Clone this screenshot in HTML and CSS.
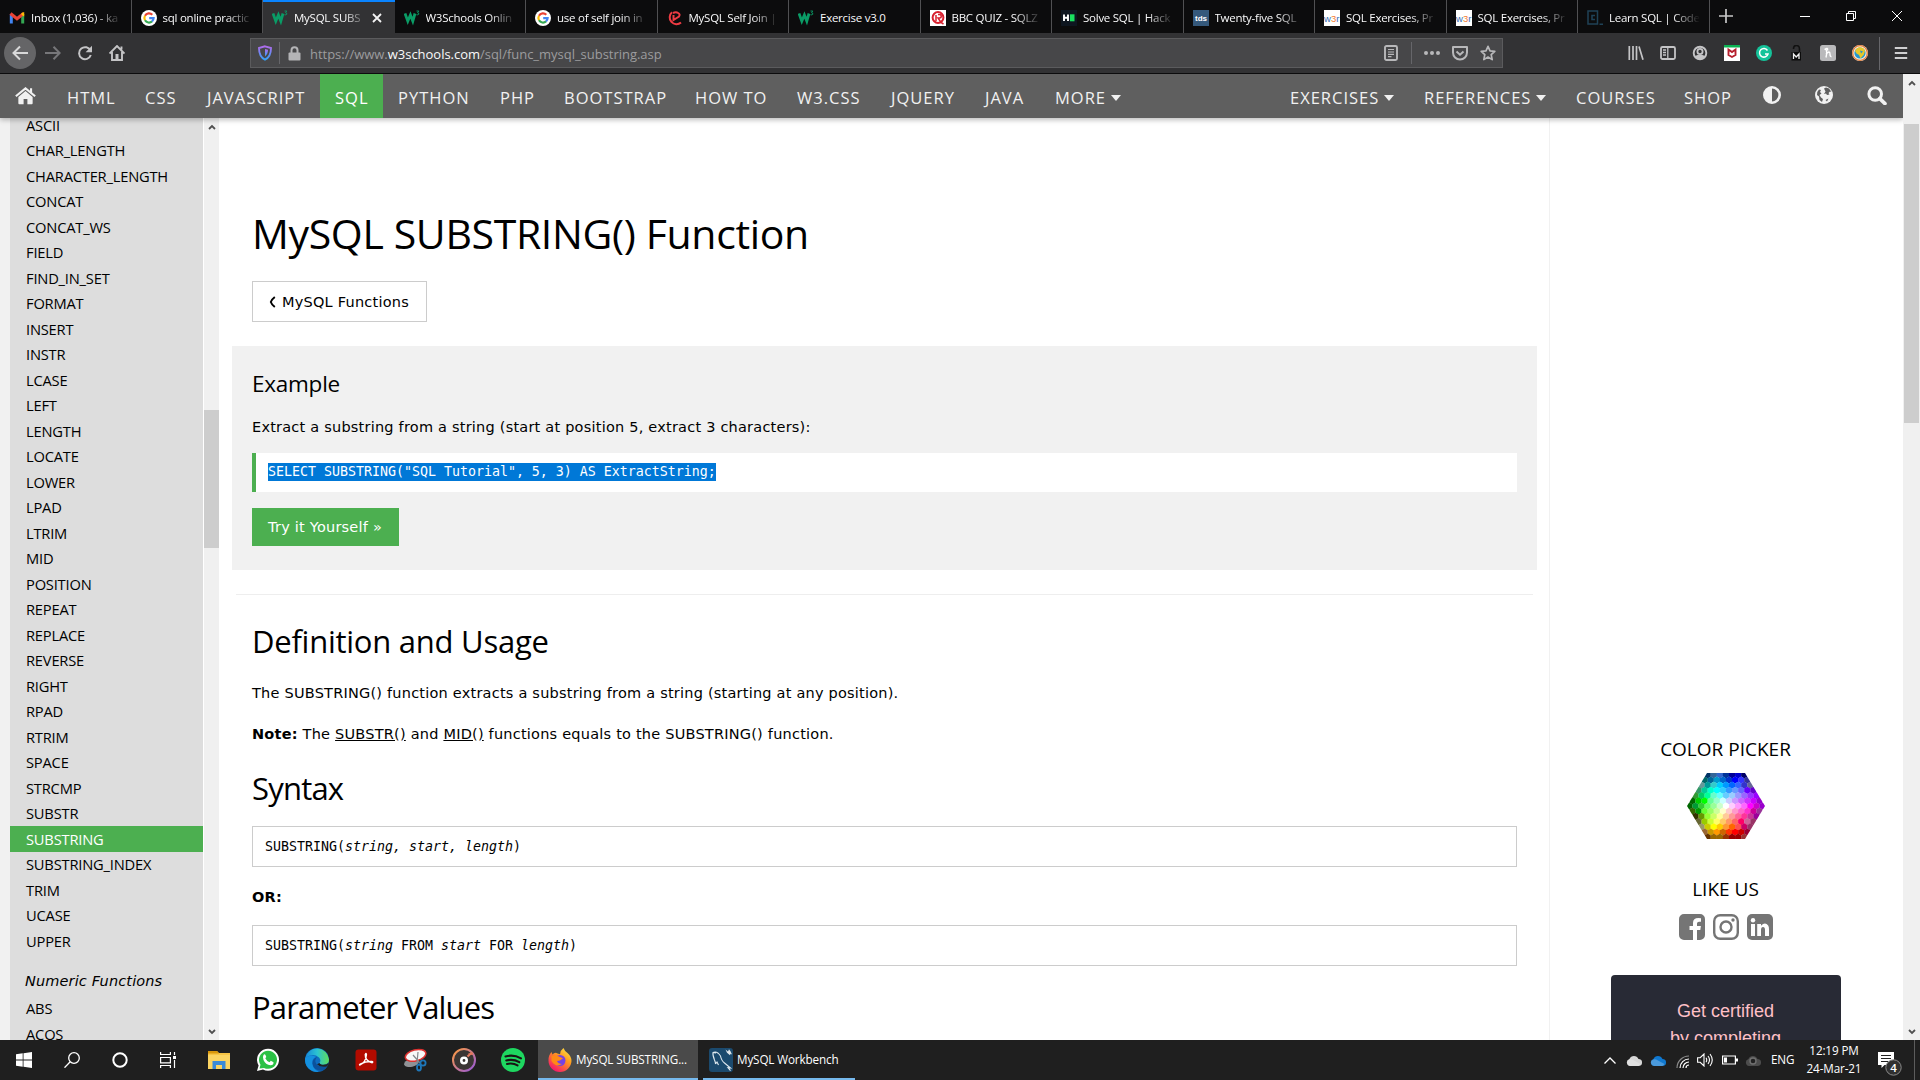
FILE: index.html
```html
<!DOCTYPE html>
<html lang="en">
<head>
<meta charset="utf-8">
<title>MySQL SUBSTRING() Function</title>
<link rel="stylesheet" href="styles.css">
</head>
<body>
<svg class="defs" width="0" height="0">
  <symbol id="w3" viewBox="0 0 16 16"><path d="M1 3.500l2.800 7.700L6.400 5l2.400 6.200L11 3.500" fill="none" stroke="#0a9c66" stroke-width="2.800"/><path d="M12.500 1h2.300l-1.300 1.700q1.600 0 1.300 1.500-.5 1-2.300.6" fill="none" stroke="#0a9c66" stroke-width=".9"/></symbol>
  <symbol id="google" viewBox="0 0 16 16"><circle cx="8" cy="8" r="8" fill="#fff"/><g fill="none" stroke-width="2.200"><path d="M11.300 4.700A4.600 4.600 0 0 0 4 5.700" stroke="#ea4335"/><path d="M4 5.700a4.600 4.600 0 0 0 0 4.600" stroke="#fbbc05"/><path d="M4 10.300a4.600 4.600 0 0 0 7 1.100" stroke="#34a853"/><path d="M11 11.400A4.600 4.600 0 0 0 12.600 8.200H8.200" stroke="#4285f4"/></g></symbol>
  <symbol id="w3r" viewBox="0 0 16 16"><rect width="16" height="16" fill="#fff"/><text x="0" y="11.500" font-size="9.500" font-family="Liberation Sans" fill="#3b6fb5">w<tspan fill="#f47b30">3</tspan>r</text></symbol>
  <symbol id="cloud" viewBox="0 0 16 11"><path d="M4 11a3.600 3.600 0 0 1-.6-7A5 5 0 0 1 12.500 4 3.500 3.500 0 0 1 12.600 11z"/><path d="M1 6Q4 3 8 5.500L14.500 9q-1 2-2.500 2H4Q0 10 1 6z" fill="#fff" opacity=".25"/></symbol>
</svg>
<div class="desktop">
  <div class="tabs">
    <div class="tab"><svg viewBox="0 0 16 16"><path d="M2.300 13.500V4.200" stroke="#4285f4" stroke-width="3"/><path d="M13.700 13.500V4.200" stroke="#34a853" stroke-width="3"/><path d="M1.500 3.500L8 8.700l6.500-5.200" fill="none" stroke="#ea4335" stroke-width="3.200"/><path d="M12.500 5V3l2.700-1v4.500z" fill="#fbbc04"/></svg><span>Inbox (1,036) - ka</span></div>
    <div class="tab"><svg><use href="#google"/></svg><span>sql online practic</span></div>
    <div class="tab active"><svg><use href="#w3"/></svg><span>MySQL SUBS</span><svg class="x" viewBox="0 0 10 10"><path d="M1 1l8 8M9 1L1 9" stroke="#f4f4f4" stroke-width="1.800"/></svg></div>
    <div class="tab"><svg><use href="#w3"/></svg><span>W3Schools Onlin</span></div>
    <div class="tab"><svg><use href="#google"/></svg><span>use of self join in</span></div>
    <div class="tab"><svg viewBox="0 0 16 16"><path d="M14 12.500A6.300 6.300 0 1 1 5 2.300M6.500 5v5l5.500-3.500q1.500-2.200-.8-3.500Q9 1.500 6 3" fill="none" stroke="#ef3b43" stroke-width="2"/></svg><span>MySQL Self Join |</span></div>
    <div class="tab"><svg><use href="#w3"/></svg><span class="full">Exercise v3.0</span></div>
    <div class="tab"><svg viewBox="0 0 16 16"><rect width="16" height="16" fill="#fff"/><circle cx="8" cy="7.500" r="5.400" fill="none" stroke="#d8202f" stroke-width="2"/><path d="M6 5v6M8 4.500h1.500a1.500 1.500 0 0 1 0 3.500H8l3 4.500 2.500 1.500" fill="none" stroke="#d8202f" stroke-width="1.500"/></svg><span>BBC QUIZ - SQLZ</span></div>
    <div class="tab"><svg viewBox="0 0 16 16"><rect width="16" height="16" fill="#0e1620"/><path d="M3 4.500v6.500M7 4.500v6.500M3 7.800h4" stroke="#fff" stroke-width="1.900"/><path d="M9 4.300h4.500v7H9z" fill="#1ae05f"/></svg><span>Solve SQL | Hack</span></div>
    <div class="tab"><svg viewBox="0 0 16 16"><rect width="16" height="16" fill="#35597c"/><text x="2" y="11" font-size="8" font-weight="700" font-family="Liberation Sans" fill="#fff">tds</text></svg><span>Twenty-five SQL</span></div>
    <div class="tab"><svg><use href="#w3r"/></svg><span>SQL Exercises, Pr</span></div>
    <div class="tab"><svg><use href="#w3r"/></svg><span>SQL Exercises, Pr</span></div>
    <div class="tab"><svg viewBox="0 0 16 16"><rect x="1" y="1" width="9.500" height="13" fill="none" stroke="#1f4257" stroke-width="1.500"/><path d="M8 5.500H5v4h3M12.500 14.300H16" fill="none" stroke="#1f4257" stroke-width="1.600"/></svg><span>Learn SQL | Code</span></div>
    <svg class="plus" viewBox="0 0 14 14"><path d="M7 0v14M0 7h14" stroke="#c8c8c8" stroke-width="1.700"/></svg>
    <div class="wincontrols">
      <svg viewBox="0 0 10 10"><path d="M0 5.500h10" stroke="#fff"/></svg>
      <svg viewBox="0 0 10 10"><path d="M.5 2.500h7v7h-7zM2.500 2.500v-2h7v7h-2" fill="none" stroke="#fff"/></svg>
      <svg viewBox="0 0 10 10"><path d="M0 0l10 10M10 0L0 10" stroke="#fff"/></svg>
    </div>
  </div>

  <div class="toolbar">
    <div class="navbtns">
      <div class="back"><svg viewBox="0 0 16 16"><path d="M16 8H1.500M8 1.500L1.500 8 8 14.500" fill="none" stroke="#d8d8d9" stroke-width="2"/></svg></div>
      <svg viewBox="0 0 16 16"><path d="M0 8h14.500M8.500 1.800L14.700 8l-6.200 6.200" fill="none" stroke="#77777a" stroke-width="2"/></svg>
      <svg viewBox="0 0 16 16"><path d="M13.600 5.800A6 6 0 1 0 13.800 10" fill="none" stroke="#c4c4c6" stroke-width="2"/><path d="M15 .8v6.400H8.600z" fill="#c4c4c6"/></svg>
      <svg viewBox="0 0 16 16"><path d="M.5 8.500L8 1l7.500 7.500M3 7v8h10V7M12.500 1.500v3" fill="none" stroke="#c4c4c6" stroke-width="1.900"/><path d="M6.500 9h3v6h-3z" fill="#c4c4c6"/></svg>
    </div>
    <div class="urlbar">
      <svg class="shield" viewBox="0 0 14 16"><defs><linearGradient id="sg" x2="0" y2="1"><stop stop-color="#b06bea"/><stop offset="1" stop-color="#33a1f8"/></linearGradient></defs><path d="M7 1.300L13 3c0 6-1.500 9.500-6 11.700C2.500 12.500 1 9 1 3z" fill="none" stroke="url(#sg)" stroke-width="1.900"/><path d="M7 4l3 .8c0 3-.8 5-3 6.700z" fill="url(#sg)"/></svg>
      <i class="sep"></i>
      <svg class="lock" viewBox="0 0 13 15"><path d="M3.500 7V4.200a3 3 0 0 1 6 0V7" fill="none" stroke="#b4b4b6" stroke-width="2"/><rect x=".5" y="6.500" width="12" height="8" rx="1" fill="#b4b4b6"/></svg>
      <span class="url">https://www.<b>w3schools.com</b>/sql/func_mysql_substring.asp</span>
      <svg class="reader" viewBox="0 0 14 16"><rect x="1" y="1" width="12" height="14" rx="1.500" fill="none" stroke="#b8b8ba" stroke-width="1.900"/><path d="M4 4.500h6M4 7h6M4 9.300h6M4 11.700h3.500" stroke="#b8b8ba" stroke-width="1.200"/></svg>
      <i class="sep"></i>
      <svg class="dots" viewBox="0 0 16 16" fill="#b8b8ba"><circle cx="2" cy="8" r="2"/><circle cx="8" cy="8" r="2"/><circle cx="14" cy="8" r="2"/></svg>
      <svg class="pocket" viewBox="0 0 16 16"><path d="M1 2h14v5.500a7 7 0 0 1-14 0z" fill="none" stroke="#b8b8ba" stroke-width="2" stroke-linejoin="round"/><path d="M4.500 6.500L8 9.700l3.500-3.200" fill="none" stroke="#b8b8ba" stroke-width="2"/></svg>
      <svg class="star" viewBox="0 0 16 16"><path d="M8 1.300l2 4.500 4.800.5-3.600 3.300 1 5L8 12l-4.200 2.600 1-5L1.200 6.300 6 5.800z" fill="none" stroke="#b8b8ba" stroke-width="1.700" stroke-linejoin="round"/></svg>
    </div>
    <div class="addons">
      <svg viewBox="0 0 16 16"><path d="M1.300 1v14M5 1v14M8.500 1v14M11 1.500l4 13.300" stroke="#c4c4c6" stroke-width="1.700"/></svg>
      <svg viewBox="0 0 16 16"><rect x="1" y="2" width="14" height="12" rx="1.500" fill="none" stroke="#c4c4c6" stroke-width="1.800"/><path d="M7.800 2v12M3 5h3M3 7.500h3M3 10h3" stroke="#c4c4c6" stroke-width="1.300"/></svg>
      <svg viewBox="0 0 16 16"><circle cx="8" cy="8" r="6.300" fill="none" stroke="#c4c4c6" stroke-width="1.900"/><circle cx="8" cy="6.500" r="2.600" fill="none" stroke="#c4c4c6" stroke-width="1.800"/><path d="M3 11q5-2.500 10 0-2 3.500-5 3.500T3 11z" fill="#c4c4c6"/></svg>
      <svg viewBox="0 0 16 16"><rect width="16" height="16" fill="#fff"/><path d="M0 0h16v2.500H0z" fill="#0bb352"/><path d="M4.500 4.500v5.500L8 12l3.500-2V4.500L8 7z" fill="none" stroke="#b51f2d" stroke-width="1.900"/></svg>
      <svg viewBox="0 0 16 16"><circle cx="8" cy="8" r="8" fill="#15c39a"/><path d="M11.500 5.500A4.300 4.300 0 1 0 12 9H9" fill="none" stroke="#fff" stroke-width="1.500"/></svg>
      <svg viewBox="0 0 16 16"><path d="M5.500 4q0-3.500 3-3.500T11.500 4v3" fill="none" stroke="#111" stroke-width="1.600"/><rect x="3.500" y="7" width="9.500" height="8.500" fill="#0b0b0b"/><path d="M5.500 14V9l2.700 3L11 9v5" fill="none" stroke="#eee" stroke-width="1.300"/></svg>
      <svg viewBox="0 0 16 16"><rect width="16" height="16" rx="2.500" fill="#b9b9bb"/><path d="M6 3.500q1.500 4 0 9M6 9q4-4 4 0 0 3 1.500 2.500M4.500 4.500q4-2.500 3 1" fill="none" stroke="#fff" stroke-width="1.400"/></svg>
      <svg viewBox="0 0 16 16"><circle cx="8" cy="8" r="8" fill="#f3efe4"/><circle cx="8" cy="8" r="7.300" fill="none" stroke="#e77d3c" stroke-width="1.300"/><circle cx="8" cy="8" r="5.600" fill="#2496cf"/><path d="M3 6q2-4 5-3.700 4 0 5 3.700l-1 3.500-3.500 4L7 10 4.500 8.500z" fill="#e5c72b"/><path d="M8 5.500l3 1-2 2z" fill="#2496cf"/></svg>
      <i class="sep"></i>
      <svg viewBox="0 0 16 16"><path d="M1.800 3h12.400M1.800 8h12.400M1.800 13h12.400" stroke="#cfcfd1" stroke-width="2"/></svg>
    </div>
  </div>

  <div class="viewport">
    <div class="page">
      <nav class="topnav">
        <a class="home"><svg viewBox="0 0 20 17"><path d="M10 3.700l6.800 5.700v6.100q0 .8-.8.800h-4.200v-5H8.200v5H4q-.8 0-.8-.8V9.400z"/><path d="M.8 8.800L10 1.200l9.200 7.600M15.300 1v4.500" fill="none" stroke="#f1f1f1" stroke-width="2"/></svg></a>
        <a class="n78">HTML</a><a class="n62">CSS</a><a class="n128">JAVASCRIPT</a><a class="n63 on">SQL</a><a class="n102">PYTHON</a><a class="n64">PHP</a><a class="n131">BOOTSTRAP</a><a class="n102">HOW TO</a><a class="n94">W3.CSS</a><a class="n94">JQUERY</a><a class="n70">JAVA</a><a class="n96">MORE<i></i></a>
        <span class="grow"></span>
        <a class="n134">EXERCISES<i></i></a><a class="n152">REFERENCES<i></i></a><a class="n108">COURSES</a><a class="n78">SHOP</a>
        <a class="ico"><svg viewBox="0 0 18 18"><circle cx="9" cy="9" r="7.700" fill="none" stroke="#f1f1f1" stroke-width="2.600"/><path d="M9 1v16a8 8 0 0 1 0-16z"/></svg></a>
        <a class="ico"><svg viewBox="0 0 18 18"><circle cx="9" cy="9" r="9"/><path d="M9 2.500l2-1 3 1 2.500 3.500-1.500-.5-1.500 1.500 1 1.500-2.500.5-1-1.500-2 .5 1.500-2.500zM2.300 6L4 3.500l2 .5-1 2 1.500 1.500-2 1.500 1.500 2.500 2 1.500-1 3-2.500-2-.5-3.500L2 9z" fill="#5f5f5f"/><path d="M10.500 14l3-1.500-1.500 3z" fill="#5f5f5f"/></svg></a>
        <a class="ico search"><svg viewBox="0 0 20 19"><circle cx="8.200" cy="8" r="6.300" fill="none" stroke="#f1f1f1" stroke-width="3"/><path d="M12.800 12.600l5.200 5" stroke="#f1f1f1" stroke-width="3.600" stroke-linecap="round"/></svg></a>
      </nav>
      <div class="columns">
        <aside class="side">
          <div class="menu">
            <a>ASCII</a><a>CHAR_LENGTH</a><a>CHARACTER_LENGTH</a><a>CONCAT</a><a>CONCAT_WS</a><a>FIELD</a><a>FIND_IN_SET</a><a>FORMAT</a><a>INSERT</a><a>INSTR</a><a>LCASE</a><a>LEFT</a><a>LENGTH</a><a>LOCATE</a><a>LOWER</a><a>LPAD</a><a>LTRIM</a><a>MID</a><a>POSITION</a><a>REPEAT</a><a>REPLACE</a><a>REVERSE</a><a>RIGHT</a><a>RPAD</a><a>RTRIM</a><a>SPACE</a><a>STRCMP</a><a>SUBSTR</a><a class="on">SUBSTRING</a><a>SUBSTRING_INDEX</a><a>TRIM</a><a>UCASE</a><a>UPPER</a>
            <h5>Numeric Functions</h5>
            <a>ABS</a><a>ACOS</a>
          </div>
          <div class="sidebar-scroll">
            <svg viewBox="0 0 8 6"><path d="M1 5l3-3 3 3" /></svg>
            <div class="thumb"></div>
            <svg viewBox="0 0 8 6"><path d="M1 1l3 3 3-3" /></svg>
          </div>
        </aside>
        <main>
          <h1>MySQL SUBSTRING() Function</h1>
          <a class="prev"><svg viewBox="0 0 7 12"><path d="M5.800 1Q2.600 3.500 1.800 6q.8 2.500 4 5" fill="none" stroke="#000" stroke-width="1.900"/></svg>MySQL Functions</a>
          <section class="example">
            <h3>Example</h3>
            <p>Extract a substring from a string (start at position 5, extract 3 characters):</p>
            <div class="code"><mark>SELECT SUBSTRING("SQL Tutorial", 5, 3) AS ExtractString;</mark></div>
            <a class="try">Try it Yourself »</a>
          </section>
          <hr>
          <h2>Definition and Usage</h2>
          <p class="p1">The SUBSTRING() function extracts a substring from a string (starting at any position).</p>
          <p class="p2"><b>Note:</b> The <u>SUBSTR()</u> and <u>MID()</u> functions equals to the SUBSTRING() function.</p>
          <h2 class="syn">Syntax</h2>
          <div class="box">SUBSTRING(<em>string, start, length</em>)</div>
          <p class="or"><b>OR:</b></p>
          <div class="box">SUBSTRING(<em>string</em> FROM <em>start</em> FOR <em>length</em>)</div>
          <h2 class="par">Parameter Values</h2>
        </main>
        <aside class="right">
          <h4>COLOR PICKER</h4>
          <svg id="picker" width="78" height="66" viewBox="0 0 78 66"></svg>
          <h4 class="like">LIKE US</h4>
          <div class="social">
            <svg viewBox="0 0 26 26"><path d="M5 0h16a5 5 0 0 1 5 5v16a5 5 0 0 1-5 5h-3V16h3.300l.6-4H18V9.500q0-1.700 2-1.700h2V4.300q-8-1.300-8 4.700v3h-3.500v4H14v10H5a5 5 0 0 1-5-5V5a5 5 0 0 1 5-5z"/></svg>
            <svg viewBox="0 0 26 26"><g fill="none" stroke="#757575" stroke-width="2.400"><rect x="1.200" y="1.200" width="23.600" height="23.600" rx="6"/><circle cx="13" cy="13" r="5.500"/></g><circle cx="20" cy="6" r="1.700"/></svg>
            <svg viewBox="0 0 26 26"><rect width="26" height="26" rx="5"/><g fill="#fff"><circle cx="6" cy="6.200" r="2.200"/><path d="M4 10h4v12H4zM10.200 10H14v1.700q4-4 7.200-.3.900 1.300.8 4V22h-4v-6q0-3-2-3t-2 3v6h-3.800z"/></g></svg>
          </div>
          <div class="cert">Get certified<br>by completing</div>
        </aside>
      </div>
    </div>
    <div class="scroll">
      <svg viewBox="0 0 8 6"><path d="M1 5l3-3 3 3" /></svg>
      <div class="thumb"></div>
      <svg viewBox="0 0 8 6"><path d="M1 1l3 3 3-3" /></svg>
    </div>
  </div>

  <div class="taskbar">
    <div class="pins">
      <svg class="s16" viewBox="0 0 16 16" fill="#fff"><path d="M0 2.300L6.700 1.300v6.200H0zM7.500 1.200L16 0v7.500H7.500zM0 8.400h6.700v6.300L0 13.700zM7.500 8.400H16V16l-8.500-1.200z"/></svg>
      <svg class="s16" viewBox="0 0 16 16" fill="none" stroke="#fff" stroke-width="1.300"><circle cx="10" cy="6" r="5.300"/><path d="M6.200 9.800L.5 15.700"/></svg>
      <svg class="s16" viewBox="0 0 16 16" fill="none" stroke="#fff" stroke-width="2"><circle cx="8" cy="8" r="6.700"/></svg>
      <svg class="s16" viewBox="0 0 16 16" fill="none" stroke="#fff" stroke-width="1.200"><path d="M.6 0v2.500h9.800V0M.6 5.500h9.800v5.300H.6zM.6 16v-2.500h9.800V16M14.500 0v3M14.500 8v8"/><path d="M13 4h3v3h-3z" fill="#fff" stroke="none"/></svg>
      <svg viewBox="0 0 24 24"><path d="M1 3h9l2 2h11v16H1z" fill="#f6c445"/><path d="M1 3h9l2 2.500H1z" fill="#d9970b"/><path d="M1 7h22v14H1z" fill="#fbd462"/><path d="M5.500 21v-8h13v8h-3.500v-4h-6v4z" fill="#3a8ad8"/></svg>
      <svg viewBox="0 0 24 24"><path d="M1 23l1.600-5.600A11 11 0 1 1 7 21.500z" fill="#fff"/><path d="M3.500 20.500l1-3.700A9 9 0 1 1 8 19.900z" fill="#2bc145"/><path d="M7.500 7q1-1.500 2 0l.8 2-1 1.300q1.500 3 4.200 4l1.300-1.500 2.700 1.400q.3 3-3 3Q9.500 16.700 7.500 12 6.300 9 7.500 7z" fill="#fff"/></svg>
      <svg viewBox="0 0 24 24"><defs><linearGradient id="eg"><stop stop-color="#1687d9"/><stop offset=".5" stop-color="#2bc3d2"/><stop offset="1" stop-color="#5fdc5a"/></linearGradient></defs><circle cx="12" cy="12" r="12" fill="#0f6dc0"/><path d="M.3 10A12 12 0 0 1 24 11.500q0 5-5.500 5.300-3.500 0-4-1.800 2-3-.5-5.500-6-5-13.700.5z" fill="url(#eg)"/><path d="M.2 10q6-4.500 11-1-4 1-4 6 .5 6 6.500 8.800A12 12 0 0 1 .2 10z" fill="#1490df"/><path d="M12.500 9q-3.500 2.500-1.500 6.500 3.500 5 11.500 2.500-1.500 3-5 4.700-9 .3-10-7.200Q7.500 10 12.500 9z" fill="#0b519c"/><path d="M14.500 15q.5 1.800 4 1.800 3.500 0 5-2-.3 2-1.200 3.400-6.500 2-10.300-2z" fill="#202124"/></svg>
      <svg viewBox="0 0 24 24"><rect x="1.500" y="1.500" width="21" height="21" rx="3" fill="#b30b00"/><path d="M6 17q6-3 6.500-10.500-.3-2-1.300 0-.2 6.500 7 8.300 1.500-1-.5-1.300-6-.2-11 2.300-2 1.200-.7 1.200z" fill="none" stroke="#fff" stroke-width="1.300"/></svg>
      <svg viewBox="0 0 24 24"><ellipse cx="8.500" cy="15" rx="7.500" ry="4" fill="#8f9296" transform="rotate(-12 8 15)"/><ellipse cx="12.500" cy="7.500" rx="10.500" ry="5.500" fill="#f7f7f7" stroke="#dd3130" stroke-width="1.500" transform="rotate(-14 12 7)"/><path d="M10 7l7 8M15 4l-1 11" stroke="#84888c" stroke-width="1.200"/><g fill="none" stroke="#1e77b9" stroke-width="1.800"><circle cx="20" cy="15" r="2.600"/><ellipse cx="16" cy="19.500" rx="2" ry="3"/></g></svg>
      <svg viewBox="0 0 24 24"><defs><linearGradient id="gg" x2="1" y2="1"><stop stop-color="#ff9b3d"/><stop offset="1" stop-color="#9458dd"/></linearGradient></defs><circle cx="12" cy="12" r="11" fill="#3a3533" stroke="url(#gg)" stroke-width="2"/><circle cx="12" cy="12.500" r="2.700" fill="#3a3533" stroke="#fff" stroke-width="2.600"/><path d="M15.500 8.500l4.500-4M16.500 6.500l4.500-1" stroke="#e0795e" stroke-width="2.200"/></svg>
      <svg viewBox="0 0 24 24"><circle cx="12" cy="12" r="12" fill="#1ed760"/><path d="M4.500 8.500q8-2.300 15.500 1.800M5.300 12.500q7-1.800 13 1.700M6 16q6-1.400 10.500 1.400" fill="none" stroke="#191414" stroke-width="2.100" stroke-linecap="round"/></svg>
    </div>
    <div class="app focus"><svg viewBox="0 0 24 24"><defs><linearGradient id="fx" x1="1" x2=".3" y2="1"><stop stop-color="#fff44f"/><stop offset=".45" stop-color="#ff9a1f"/><stop offset="1" stop-color="#f5156c"/></linearGradient></defs><path d="M12 24A11.500 11.500 0 0 1 .5 12Q.5 7 3.500 4l1 2.500Q7 3.500 9.500 5.500l2.500.8Q12.500 2 15.500 0q1 3 4 5 4 3.500 4 8A11.500 11.500 0 0 1 12 24z" fill="url(#fx)"/><circle cx="12" cy="12.500" r="5.500" fill="#7542e5"/><path d="M3.500 8q5-1.500 8.500 1l3 1.300-3 2.200-3 .5q1 3 5 3-6 4-10.500-3z" fill="#ff8a16"/></svg><span>MySQL SUBSTRING...</span></div>
    <div class="app wb"><svg viewBox="0 0 24 24"><rect width="24" height="24" rx="3" fill="#1b4a6e"/><path d="M6.500 16q0-2-1-4-2-5-1.500-7.500Q8 2.500 11.500 8q1 5 4 7l6 5-2.500-.3 2.500 3M6.500 16l1.500-2 1.500 3M4 4.500l3 .5" fill="none" stroke="#dfe9ef" stroke-width="1.100"/><path d="M16.500 1.500l2.500 2 1-2.300 1.500 2 1.500 3.300-1.500-.8-.5 1.500-3-2.500z" fill="#dfe6ea"/></svg><span>MySQL Workbench</span></div>
    <div class="tray">
      <svg class="chev" viewBox="0 0 12 7"><path d="M.5 6.500L6 1l5.500 5.500" fill="none" stroke="#fff" stroke-width="1.300"/></svg>
      <svg class="cl" fill="#d6d6d6"><use href="#cloud"/></svg>
      <svg class="cl" fill="#0f78d0"><use href="#cloud"/></svg>
      <svg class="wifi" viewBox="0 0 13 13" fill="none" stroke-width="1.200"><path d="M1 13A12 12 0 0 1 13 1" stroke="#8a8a8a"/><path d="M4 13a9 9 0 0 1 9-9M7 13a6 6 0 0 1 6-6M10 13a3 3 0 0 1 3-3" stroke="#fff"/></svg>
      <svg class="snd" viewBox="0 0 16 14" fill="none" stroke="#fff" stroke-width="1.100"><path d="M.6 4.700h2.600L7 1v12L3.200 9.300H.6zM9 4.800q1.500 2.200 0 4.400M11 3q3 4 0 8M13 1q4.500 6 0 12"/></svg>
      <svg class="bat" viewBox="0 0 16 10"><path d="M.6 1h12.800v8H.6z" fill="none" stroke="#fff" stroke-width="1.200"/><path d="M14 3.500h2v3h-2zM2 2.500h3v5H2z" fill="#fff"/></svg>
      <svg class="cl dim" viewBox="0 0 16 11"><path d="M4 11a3.600 3.600 0 0 1-.6-7A5 5 0 0 1 12.500 4 3.500 3.500 0 0 1 12.600 11z" fill="#4c4c4c"/><circle cx="8" cy="6" r="3" fill="#222" stroke="#707070" stroke-width="1.400"/></svg>
      <span class="eng">ENG</span>
      <div class="clock"><span>12:19 PM</span><span>24-Mar-21</span></div>
      <div class="note"><svg viewBox="0 0 24 24"><path d="M0 0h16v13H6.500L3.500 16v-3H0z" fill="#fff"/><path d="M3 3.500h10M3 6.500h10M3 9.500h7" stroke="#222" stroke-width="1.200"/><circle cx="15.500" cy="15.500" r="7.700" fill="#303030" stroke="#8b8b8b"/><text x="15.500" y="19.500" text-anchor="middle" font-size="11.500" font-weight="600" font-family="Open Sans" fill="#fff">4</text></svg></div>
    </div>
  </div>
</div>
<script src="picker.js"></script>
</body>
</html>
```
FILE: styles.css
```css
* { box-sizing: border-box; }
body { margin: 0; overflow: hidden; background: #fff; }
.defs { display: block; position: absolute; }
svg { display: block; flex: none; }
.desktop { width: 1920px; height: 1080px; display: flex; flex-direction: column; font-family: "Open Sans", sans-serif; }

/* tab strip */
.tabs { height: 33px; background: #0c0c0d; display: flex; align-items: center; color: #f9f9fa; flex: none; }
.tab { width: 131.5px; height: 33px; padding: 2px 9px 0 9px; display: flex; align-items: center; gap: 6px; border-right: 1px solid #505052; flex: none; }
.tab svg { width: 16px; height: 16px; }
.tab span { flex: 1; font-size: 11.5px; letter-spacing: -.25px; white-space: nowrap; overflow: hidden; -webkit-mask-image: linear-gradient(to right, #000 70%, transparent 100%); mask-image: linear-gradient(to right, #000 70%, transparent 100%); }
.tab span.full { -webkit-mask-image: none; mask-image: none; }
.tab.active { background: #323234; border-right: 0; border-top: 2px solid #0a84ff; padding-top: 0; }
.tab svg.x { width: 10px; height: 10px; margin-right: 4px; margin-left: -1px; }
.plus { width: 14px; height: 14px; margin-left: 9px; margin-bottom: 1px; }
.wincontrols { margin-left: auto; display: flex; gap: 36px; padding: 0 18px 1px 0; }
.wincontrols svg { width: 10px; height: 10px; }

/* toolbar */
.toolbar { height: 41px; background: #323234; border-bottom: 1px solid #0c0c0d; display: flex; align-items: center; flex: none; }
.navbtns { display: flex; width: 250px; align-items: center; padding-left: 4px; gap: 16px; }
.navbtns svg { width: 16px; height: 16px; }
.back { width: 32px; height: 32px; border-radius: 50%; background: #656567; display: flex; align-items: center; justify-content: center; margin-right: -7px; }
.urlbar { width: 1253px; height: 30px; background: #474749; border: 1px solid #5b5b5d; display: flex; align-items: center; padding: 0 6px 0 7px; }
.sep { width: 1px; height: 22px; background: #66666a; }
.shield { width: 14px; height: 16px; margin-right: 7px; }
.lock { width: 13px; height: 15px; margin: 0 9px 0 8px; }
.url { flex: 1; font-size: 13px; letter-spacing: -.02px; color: #9c9c9e; padding-top: 1px; }
.url b { font-weight: 400; color: #f9f9fa; }
.reader { width: 14px; height: 16px; margin-right: 13px; }
.dots { width: 16px; height: 16px; margin: 0 12px; }
.pocket { width: 16px; height: 16px; margin-right: 12px; }
.star { width: 16px; height: 16px; }
.addons { flex: 1; display: flex; align-items: center; gap: 16px; padding-left: 125px; }
.addons svg { width: 16px; height: 16px; }
.addons .sep { height: 33px; margin: 0 -3px 0 -5px; }

/* site */
.viewport { flex: none; height: 966px; display: flex; }
.page { width: 1903px; display: flex; flex-direction: column; overflow: hidden; }
.topnav { height: 44px; background: #5f5f5f; display: flex; color: #f1f1f1; font-size: 16.500px; letter-spacing: 1px; flex: none; box-shadow: 0 2px 5px rgba(0,0,0,.26); z-index: 1; }
.topnav a { display: flex; align-items: center; padding: 3px 0 0 15px; white-space: nowrap; flex: none; }
.topnav a.home { width: 52px; padding-top: 0; padding-bottom: 0; }
.home svg { width: 21px; height: 18px; fill: #f1f1f1; }
.topnav .on { background: #4caf50; color: #fff; }
.topnav i { border: 5px solid transparent; border-top: 6px solid #f1f1f1; border-bottom: 0; margin-left: 5px; }
.grow { flex: 1; }
.n62 { width: 62px; } .n63 { width: 63px; } .n64 { width: 64px; } .n70 { width: 70px; } .n78 { width: 78px; }
.n94 { width: 94px; } .n96 { width: 96px; } .n102 { width: 102px; } .n108 { width: 108px; }
.n128 { width: 128px; } .n131 { width: 131px; } .n134 { width: 134px; } .n152 { width: 152px; }
.topnav a.ico { width: 52px; padding: 0 0 2px 16px; }
.ico svg { width: 18px; height: 18px; fill: #f1f1f1; }
.ico.search svg { width: 20px; height: 19px; }
.columns { flex: 1; display: flex; min-height: 0; }

.side { width: 220px; padding-left: 10px; background: #f1f1f1; display: flex; overflow: hidden; }
.menu { width: 193px; background: #ddd; margin-top: -6px; }
.menu a { display: block; height: 25.500px; padding: 2.500px 0 0 16px; font-size: 14.700px; line-height: 21px; letter-spacing: -.2px; color: #000; white-space: nowrap; }
.menu a.on { background: #4caf50; color: #fff; }
.menu h5 { margin: 16px 0 4px 15px; font: italic 14.500px/22px "DejaVu Sans", sans-serif; letter-spacing: .13px; }
.sidebar-scroll { width: 17px; border: 1px solid #fff; border-width: 0 1px; display: flex; flex-direction: column; justify-content: space-between; align-items: center; background: #f0f0f0; padding: 6px 0 5px; }
.sidebar-scroll .thumb { width: 15px; height: 138px; margin-top: 280px; margin-bottom: auto; background: #cdcdcd; }
.sidebar-scroll svg, .scroll svg { width: 8px; height: 6px; fill: none; stroke: #505050; stroke-width: 1.800; }

main { width: 1330px; border-right: 1px solid #f1f1f1; padding: 0 12px; font: 14.500px/22.500px "DejaVu Sans", sans-serif; letter-spacing: .22px; color: #000; overflow: hidden; }
h1, h2, h3, h4 { font-family: "Open Sans", sans-serif; font-weight: 400; margin: 0; }
h1 { font-size: 41px; line-height: 62px; letter-spacing: -.35px; padding: 84px 0 0 20px; }
.prev { display: flex; align-items: center; gap: 6px; width: 175px; height: 41px; margin: 17px 0 0 20px; border: 1px solid #ccc; padding: 1px 0 0 16px; white-space: nowrap; }
.prev svg { width: 7px; height: 12px; }
.example { margin-top: 24px; height: 224px; background: #f1f1f1; padding: 20px; }
h3 { font-size: 22.500px; line-height: 36px; letter-spacing: -.25px; }
.example p { margin: 14px 0; }
.code { height: 39px; background: #fff; border-left: 4px solid #4caf50; padding: 8px 12px; }
.code, .box { font: 13.290px/22px "DejaVu Sans Mono", monospace; letter-spacing: 0; white-space: pre; }
mark { background: #0078d7; color: #fff; padding: 1px 0 2px; }
.try { display: flex; align-items: center; width: 147px; height: 38px; margin-top: 16px; background: #4caf50; color: #fff; padding: 2px 0 0 16px; white-space: nowrap; }
hr { border: 0; height: 1px; background: #eee; margin: 24px 4px 0; }
h2 { font-size: 31px; line-height: 48px; letter-spacing: -.25px; padding-left: 20px; margin-top: 22px; }
main > p { margin: 0 0 0 20px; }
.p1 { padding-top: 17px; }
.p2 { padding-top: 18px; }
h2.syn { margin-top: 19px; letter-spacing: -.8px; }
.box { height: 41px; border: 1px solid #ccc; margin: 0 20px; padding: 9px 12px; }
h2.syn + .box { margin-top: 14px; }
main > .or { padding: 19px 0; height: 58px; }
h2.par { margin-top: 17px; letter-spacing: -.85px; }

.right { flex: 1; display: flex; flex-direction: column; align-items: center; padding: 617px 2px 0 0; }
h4 { font-size: 19px; line-height: 28px; white-space: nowrap; }
#picker { margin-top: 10px; }
h4.like { margin-top: 36px; }
.social { display: flex; gap: 8px; margin-top: 11px; }
.social svg { width: 26px; height: 26px; fill: #757575; }
.cert { width: 230px; height: 120px; flex: none; margin-top: 35px; border-radius: 4px; background: #282a35; color: #ffc0c7; padding-top: 23px; text-align: center; font: 18px/27px "Liberation Sans", sans-serif; }

.scroll { width: 17px; background: #f0f0f0; display: flex; flex-direction: column; align-items: center; padding: 6px 0 5px; }
.scroll .thumb { width: 15px; height: 299px; margin-top: 38px; margin-bottom: auto; background: #cdcdcd; }

/* taskbar */
.taskbar { height: 40px; flex: none; background: #1f1f1f; color: #fff; display: flex; font-size: 11.700px; letter-spacing: -.13px; }
.pins { width: 538px; display: flex; align-items: center; gap: 25px; padding-left: 16px; }
.pins svg { width: 24px; height: 24px; }
.pins svg.s16 { width: 16px; height: 16px; margin-right: 7px; }
.pins svg.s16:nth-child(4) { margin-right: 6px; }
.app { height: 40px; display: flex; align-items: center; border-bottom: 2px solid #76b9ed; padding-top: 1px; white-space: nowrap; }
.app span { padding-bottom: 2px; }
.app svg { width: 24px; height: 24px; margin-right: 4px; }
.focus { width: 160px; background: #4a4a4a; padding-left: 10px; }
.wb { width: 152px; margin-left: 5px; padding-left: 6px; }
.tray { margin-left: auto; display: flex; align-items: center; }
.chev { width: 12px; height: 7px; margin-right: 10px; }
.cl { width: 16px; height: 11px; margin-right: 8px; }
.wifi { width: 13px; height: 13px; margin: 2px 8px 0 2px; }
.snd { width: 16px; height: 14px; margin-right: 9px; }
.bat { width: 16px; height: 10px; margin-right: 7px; }
.eng { width: 32px; padding: 0 0 2px 2px; }
.clock { width: 66px; display: flex; flex-direction: column; line-height: 18px; text-align: center; padding-bottom: 2px; }
.note { width: 41px; height: 40px; margin-left: 7px; padding: 12px 0 0 4px; border-right: 1px solid #5c5c5c; margin-right: 5px; }
.note svg { width: 24px; height: 24px; }
```
FILE: picker.js
```js
// Hexagonal colour map: 13 rows of cells clipped to a large hexagon.
const rows = [
  "003366 336699 3366cc 003399 000099 0000cc 000066",
  "006666 006699 0099cc 0066cc 0033cc 0000ff 3333ff 333399",
  "669999 009999 33cccc 00ccff 0099ff 0066ff 3366ff 3333cc 666699",
  "339966 00cc99 00ffcc 00ffff 33ccff 3399ff 6699ff 6666ff 6600ff 6600cc",
  "339933 00cc66 00ff99 66ffcc 66ffff 66ccff 99ccff 9999ff 9966ff 9933ff 9900ff",
  "006600 00cc00 00ff00 66ff99 99ffcc ccffff ccccff cc99ff cc66ff cc33ff cc00ff 9900cc",
  "006600 009933 33cc33 66ff66 99ff99 ccffcc ffffff ffccff ff99ff ff66ff ff00ff cc00cc 9900cc",
  "336600 009900 66ff33 99ff66 ccff99 ffffcc ffcccc ff99cc ff66cc ff33cc cc0099 993399",
  "333300 669900 99ff33 ccff66 ffff99 ffcc99 ff9999 ff6699 ff3399 cc3399 990099",
  "666633 99cc00 ccff33 ffff66 ffcc66 ff9966 ff6666 ff0066 cc6699 993366",
  "999966 cccc00 ffff00 ffcc00 ff9933 ff6600 ff5050 cc0066 993366",
  "996633 cc9900 ff9900 cc6600 ff3300 ff0000 cc0000 990033",
  "663300 996600 996600 993300 990000 990000 993333"
];
let cells = '<clipPath id="hex"><path d="M20 0h38l20 33-20 33H20L0 33z"/></clipPath><g clip-path="url(#hex)">';
rows.forEach((row, r) => {
  const colors = row.split(" ");
  colors.forEach((c, i) => {
    const x = 39 + (i - (colors.length - 1) / 2) * 6.1;
    const y = 33 + (r - 6) * 5.2;
    cells += `<path d="M${x} ${y - 3.6}l3.150 1.800v3.600l-3.150 1.800-3.150-1.800v-3.600z" fill="#${c}"/>`;
  });
});
document.getElementById("picker").innerHTML = cells + "</g>";
```
